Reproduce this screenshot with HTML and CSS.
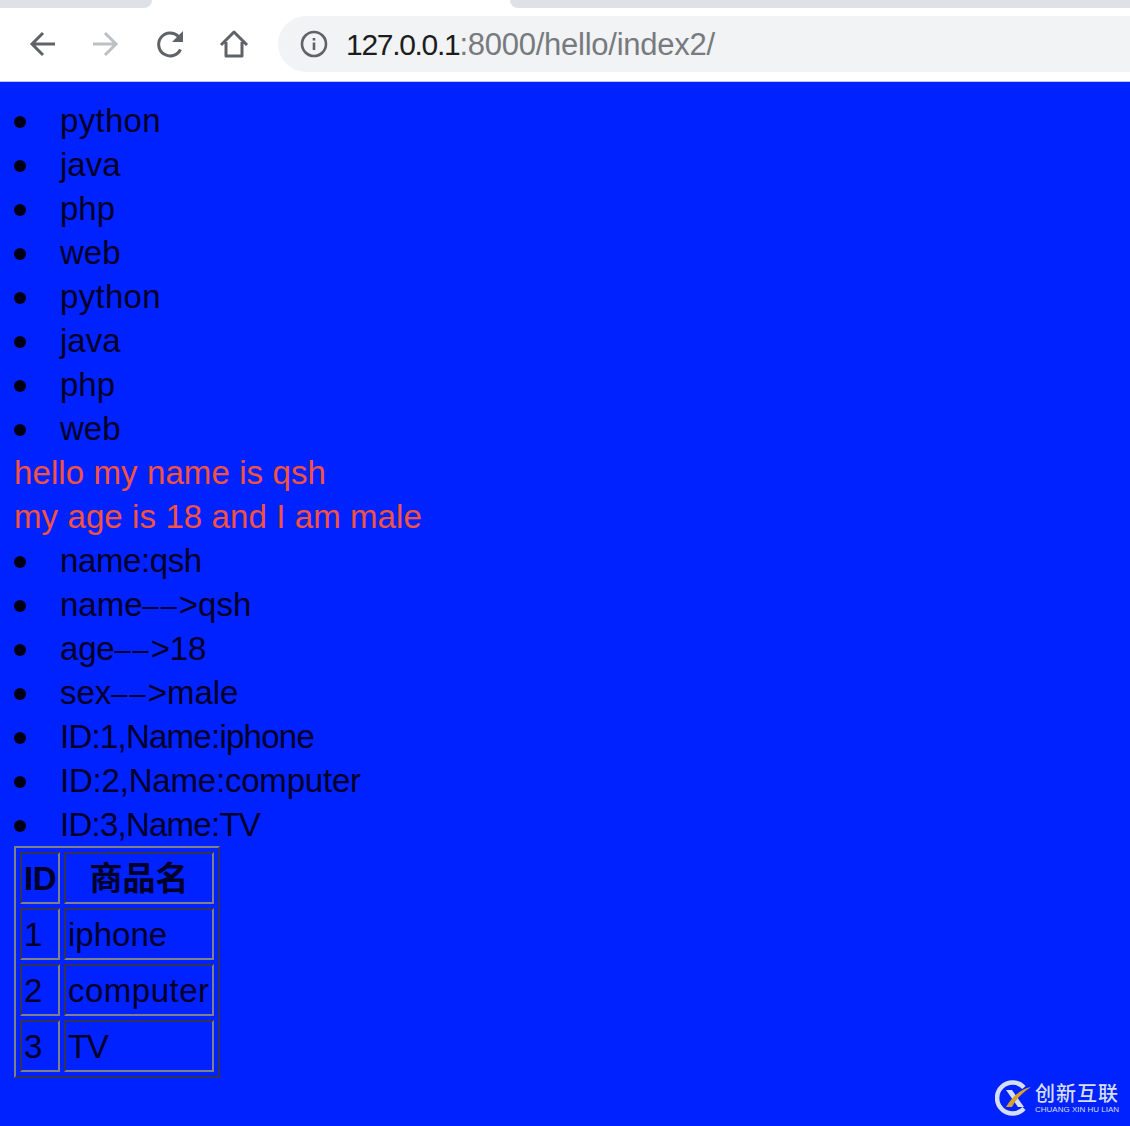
FILE: index.html
```html
<!DOCTYPE html>
<html lang="zh">
<head>
<meta charset="utf-8">
<title>index2</title>
<link rel="stylesheet" href="styles.css">
</head>
<body>
<header class="chrome">
  <div class="tabs"><div class="tab-left"></div><div class="tab-active"></div><div class="tab-right"></div></div>
  <div class="toolbar">
    <svg class="nav" viewBox="0 0 32 32"><path d="M29 16H6M17 5 6 16l11 11" fill="none" stroke="#5f6368" stroke-width="3"/></svg>
    <svg class="nav" viewBox="0 0 32 32"><path d="M3 16h23M15 5l11 11-11 11" fill="none" stroke="#bdc1c6" stroke-width="3"/></svg>
    <svg class="nav" viewBox="0 0 32 32"><path d="M26.5 21.5A11.5 11.5 0 1 1 24.5 8.5" fill="none" stroke="#5f6368" stroke-width="3"/><path d="M29 3v11H18z" fill="#5f6368"/></svg>
    <svg class="nav" viewBox="0 0 32 32"><path d="M3 17 16 4l13 13M8 14v14h16V14" fill="none" stroke="#5f6368" stroke-width="3" stroke-linejoin="round"/></svg>
    <div class="omnibox">
      <svg class="info" viewBox="0 0 28 28"><circle cx="14" cy="14" r="12" fill="none" stroke="#5f6368" stroke-width="2.6"/><path d="M12.7 12.5h2.6V20h-2.6zM12.7 8h2.6v2.6h-2.6z" fill="#5f6368"/></svg>
      <span class="url"><span class="host">127.0.0.1</span>:8000/hello/index2/</span>
    </div>
  </div>
</header>
<main class="page">
  <ul class="list">
    <li><span class="wide">python</span></li><li><span>java</span></li><li><span>php</span></li><li><span>web</span></li>
    <li><span class="wide">python</span></li><li><span>java</span></li><li><span>php</span></li><li><span>web</span></li>
  </ul>
  <p class="red">hello my name is qsh</p>
  <p class="red">my age is 18 and I am male</p>
  <ul class="list">
    <li><span class="snug">name:qsh</span></li>
    <li><span>name<span class="dash">––</span>&gt;qsh</span></li>
    <li><span class="snug-s">age<span class="dash">––</span>&gt;18</span></li>
    <li><span>sex<span class="dash">––</span>&gt;male</span></li>
    <li><span class="tight">ID:1,Name:iphone</span></li>
    <li><span class="snug-s">ID:2,Name:computer</span></li>
    <li><span class="tight">ID:3,Name:TV</span></li>
  </ul>
  <table class="goods">
    <tr><th class="col-id">ID</th><th class="col-name">商品名</th></tr>
    <tr><td>1</td><td>iphone</td></tr>
    <tr><td>2</td><td class="stretch">computer</td></tr>
    <tr><td>3</td><td class="kern">TV</td></tr>
  </table>
</main>
<aside class="mark">
  <svg class="mark-logo" viewBox="0 0 36 36">
    <path d="M29 7.5A15.5 15.5 0 1 0 29 28.5" fill="none" stroke="#d5def2" stroke-width="4.5"/>
    <path d="M11 10h6l12 17h-6z" fill="#d5def2"/>
    <path d="M36 7C26 9 18 16 11 27h6C21 19 28 12 36 7z" fill="#d9a12c"/>
  </svg>
  <div class="mark-text"><div class="mark-cn">创新互联</div><div class="mark-en">CHUANG XIN HU LIAN</div></div>
</aside>
</body>
</html>
```
FILE: styles.css
```css
html, body { margin: 0; padding: 0; }
body {
  background: #0022ff;
  color: #000028;
  font-family: "Liberation Sans", "Noto Sans CJK SC", sans-serif;
  font-size: 33px;
  line-height: 44px;
  min-height: 1126px;
  position: relative;
  overflow: hidden;
}
.chrome { background: #fff; height: 82px; box-sizing: border-box; border-bottom: 1px solid #c4c8d8; }
.tabs { display: flex; height: 8px; }
.tab-left { width: 152px; background: #dee1e6; border-bottom-right-radius: 10px; }
.tab-active { width: 358px; }
.tab-right { flex: 1; background: #dee1e6; border-bottom-left-radius: 10px; }
.toolbar { display: flex; align-items: center; height: 56px; margin-top: 8px; padding-left: 26px; }
.nav { width: 32px; height: 32px; margin-right: 32px; flex: none; }
.omnibox {
  flex: 1; height: 56px; margin-left: -4px;
  background: #f1f3f4; border-radius: 28px 0 0 28px;
  display: flex; align-items: center; padding-left: 22px; gap: 18px;
}
.info { width: 28px; height: 28px; flex: none; }
.url { font-size: 31px; color: #777a7e; white-space: nowrap; letter-spacing: -0.25px; padding-top: 2px; }
.host { color: #1c1d20; font-size: 30px; letter-spacing: -1.3px; line-height: 0; }
.page { padding: 17px 14px 0; }
.list { margin: 0; padding: 0; list-style: none; }
.list li { display: flex; align-items: center; }
.list li::before {
  content: ""; flex: none; width: 12px; height: 12px; margin: 2px 34px 0 0;
  border-radius: 50%; background: #000014;
}
.dash { font-size: 29px; letter-spacing: 2px; line-height: 0; }
.wide { letter-spacing: 0.3px; }
.snug { letter-spacing: -0.4px; }
.snug-s { letter-spacing: -0.2px; }
.tight { letter-spacing: -0.75px; }
.red { margin: 0; color: #f25240; letter-spacing: 0.1px; }
.goods {
  border-collapse: separate; border-spacing: 4px; margin-top: -1px;
  border: 2px solid; border-color: #808088 #33335a #33335a #808088;
}
.goods th, .goods td {
  border: 2px solid; border-color: #33335a #808088 #808088 #33335a;
  padding: 3px 2px 1px;
}
.goods td { text-align: left; }
.goods th { text-align: center; font-weight: 700; }
.col-id { width: 32px; letter-spacing: -0.6px; }
.col-name { width: 142px; }
.goods .stretch { letter-spacing: 0.5px; }
.goods .kern { letter-spacing: -1.5px; }
.mark { position: absolute; right: 9px; bottom: 10px; display: flex; align-items: center; gap: 4px; color: #d5def2; }
.mark-logo { width: 36px; height: 36px; }
.mark-text { width: 86px; }
.mark-cn { font-size: 20px; line-height: 22px; letter-spacing: 1px; white-space: nowrap; font-weight: 500; }
.mark-en { font-size: 8px; line-height: 9px; white-space: nowrap; }
```
